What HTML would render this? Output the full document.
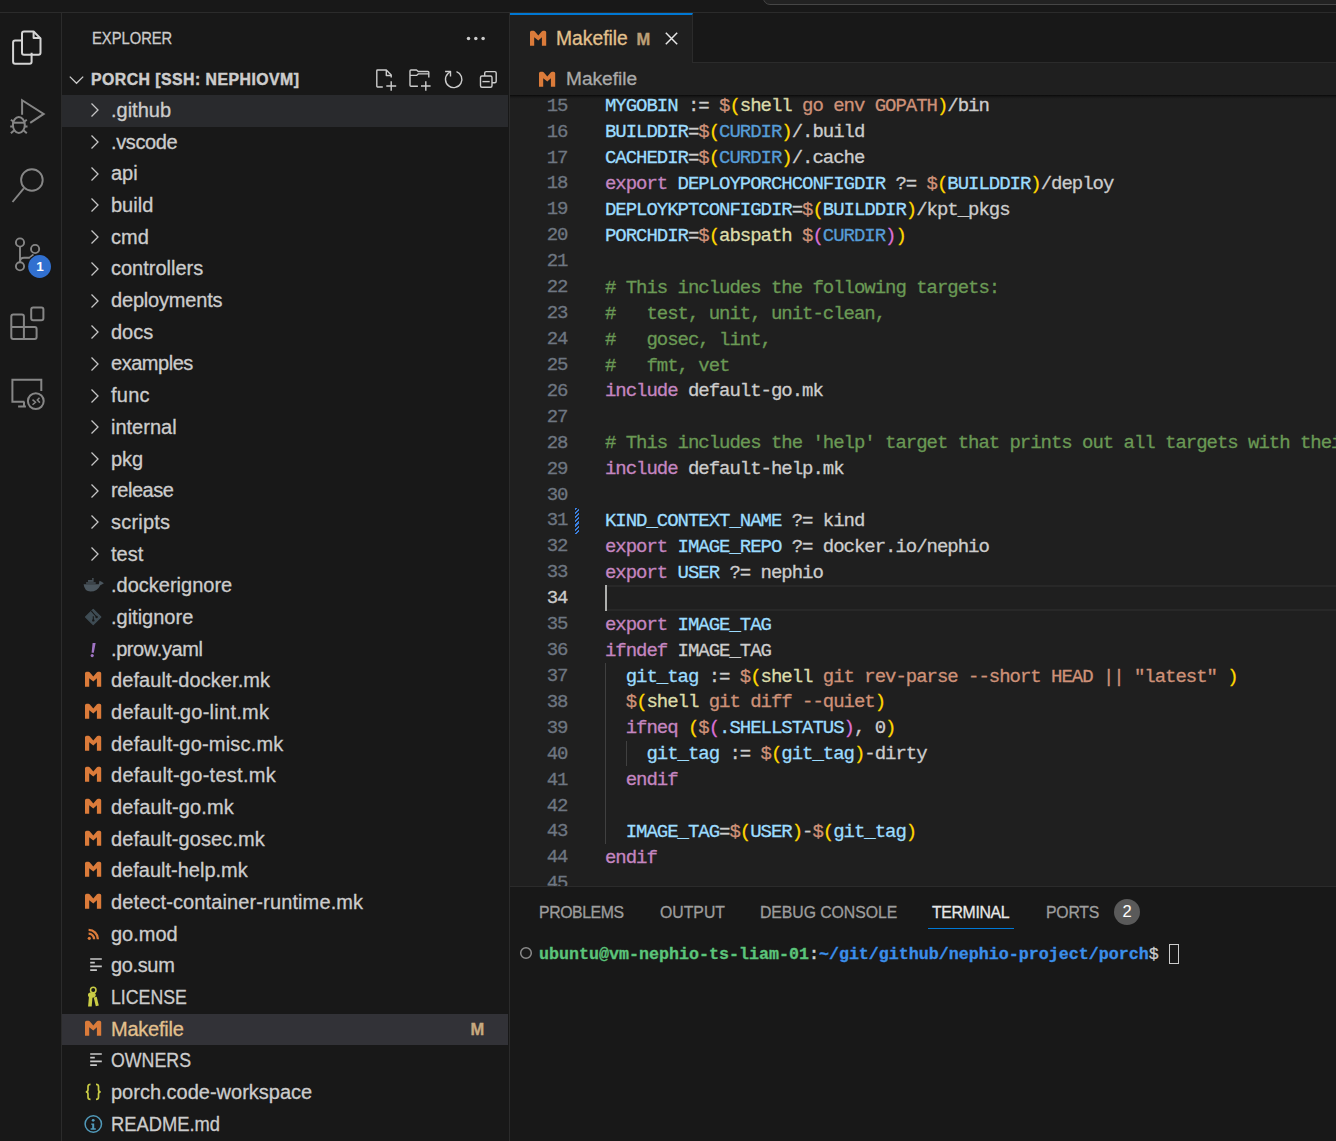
<!DOCTYPE html>
<html><head><meta charset="utf-8">
<style>
*{margin:0;padding:0;box-sizing:border-box}
html,body{width:1336px;height:1141px;overflow:hidden;background:#181818;font-family:"Liberation Sans",sans-serif;color:#cccccc}
.abs{position:absolute}
#title{position:absolute;left:0;top:0;width:1336px;height:13px;background:#181818;border-bottom:1px solid #2b2b2b}
#search{position:absolute;left:763px;top:-30px;width:700px;height:35px;border:1px solid #464646;border-radius:7px;background:#222222}
#act{position:absolute;left:0;top:13px;width:62px;height:1128px;background:#181818;border-right:1px solid #2b2b2b}
#act svg{position:absolute}
#side{position:absolute;left:62px;top:13px;width:448px;height:1128px;background:#181818;border-right:1px solid #2b2b2b}
#side .title{position:absolute;left:29.5px;top:0px;height:50px;line-height:50px;font-size:16.5px;color:#cccccc;transform:scaleX(0.893);transform-origin:0 0}
#side .dots{position:absolute;left:405px;top:24px}
#side .hdr{position:absolute;left:0;top:50.4px;width:447px;height:31.68px}
#side .hdr .t{position:absolute;left:29px;top:1px;line-height:31.68px;font-size:15.8px;letter-spacing:0.48px;font-weight:700;color:#cccccc}
#side .hdr svg{position:absolute}
.row{position:absolute;left:0;width:446px;height:31.68px}
.row.hov{background:#292a2d}
.row.sel{background:#323237}
.row .chev{position:absolute;left:28.3px;top:7.4px}
.row .fi{position:absolute;left:21px;top:6px;overflow:visible}
.row .nm{position:absolute;left:49px;top:0;line-height:31.68px;font-size:20px;color:#cccccc;white-space:pre}
.row.sel .nm{color:#e2c08d}
.row .deco{position:absolute;left:408.5px;top:0;line-height:31.68px;font-size:16.5px;font-weight:700;color:#e2c08d;opacity:.85}
#editor{position:absolute;left:510px;top:13px;width:826px;height:873px;background:#1f1f1f;overflow:hidden}
#tabs{position:absolute;left:0;top:0;width:826px;height:50px;background:#181818;border-bottom:1px solid #2b2b2b}
#tab{position:absolute;left:0;top:0;width:183px;height:50px;background:#1f1f1f;border-top:2px solid #0078d4;border-right:1px solid #2b2b2b}
#tab .nm{position:absolute;left:46px;top:0;line-height:48px;font-size:19.3px;color:#e2c08d}
#tab .m{position:absolute;left:126.5px;top:0;line-height:48px;font-size:16.5px;font-weight:700;color:#e2c08d;opacity:.8}
#tab svg{position:absolute}
#bc{position:absolute;left:0;top:50px;width:826px;height:32px;background:#1f1f1f}
#bc .nm{position:absolute;left:56px;top:0;line-height:32px;font-size:19.1px;color:#a9a9a9}
#bc svg{position:absolute}
#code{position:absolute;left:0;top:82px;width:826px;height:791px;overflow:hidden;font-family:"Liberation Mono",monospace;font-size:19px;letter-spacing:-1.03px}
#code .ln{position:absolute;left:0;margin-top:-0.6px;width:57.5px;text-align:right;height:25.92px;line-height:25.92px;color:#6e7681}
#code .ln.act{color:#cccccc}
#code .cl{position:absolute;left:95px;height:25.92px;line-height:25.92px;white-space:pre}
#shadow{position:absolute;left:0;top:82px;width:826px;height:4px;background:linear-gradient(#000000b0,#00000040 45%,#00000000)}
#curline{position:absolute;left:95px;top:572px;width:731px;height:26px;border-top:2px solid #282828;border-bottom:2px solid #282828}
#cursor{position:absolute;left:95px;top:572px;width:2px;height:26px;background:#aeafad}
.guide{position:absolute;width:1px;background:#404040}
#panel{position:absolute;left:510px;top:886px;width:826px;height:255px;background:#181818;border-top:1px solid #2b2b2b}
#panel .pt{position:absolute;top:1px;line-height:50px;font-size:15.8px;color:#9d9d9d;white-space:pre}
#panel .pt.on{color:#e7e7e7}
#panel .ul{position:absolute;left:418px;top:41px;width:86px;height:1px;background:#0078d4}
#panel .badge{position:absolute;left:604px;top:12px;width:26px;height:26px;border-radius:13px;background:#5a5a5a;color:#fff;font-size:16.5px;text-align:center;line-height:24.8px}
#term{position:absolute;left:29px;top:57px;font-family:"Liberation Mono",monospace;font-weight:700;font-size:16.67px;line-height:22px;white-space:pre}
#tcur{position:absolute;left:659px;top:57px;width:10px;height:20px;border:1px solid #cccccc}
body *{-webkit-text-stroke:0.3px currentColor}
#side .hdr .t{-webkit-text-stroke:0.45px currentColor}
#term,#panel .badge{-webkit-text-stroke:0.05px currentColor}
</style></head><body>
<div id="title"><div id="search"></div></div>

<div id="act">
  <svg style="left:0;top:0" width="61" height="420" viewBox="0 13 61 420">
    <g fill="none" stroke="#d4d4d4" stroke-width="2" stroke-linejoin="round">
      <path d="M24 31.5h9.6l6.9 6.9V52.8q0 2-2 2H24q-2 0-2-2V33.5q0-2 2-2z"/>
      <path d="M33.6 31.5v6.5h6.9"/>
      <path d="M22 40.5h-6.9q-2 0-2 2v19.2q0 2 2 2h14.5q2 0 2-2v-8.9"/>
    </g>
    <g fill="none" stroke="#868686" stroke-width="2">
      <path d="M22.1 114.8V100.2L43.7 113.9 30.2 122.9"/>
      <ellipse cx="18.85" cy="125" rx="5.95" ry="7.9"/>
      <path d="M13.2 122.7h11.3"/>
      <path d="M10.9 119.8l2.7 2M26.8 119.8l-2.7 2M10.2 126.4h2.7M27.5 126.4h-2.7M10.9 133.3l3.1-2.7M26.8 133.3l-3.1-2.7"/>
    </g>
    <g fill="none" stroke="#868686" stroke-width="1.9">
      <circle cx="31.9" cy="180" r="10.8"/>
      <path d="M23.8 188.3 12.5 202"/>
    </g>
    <g fill="none" stroke="#868686" stroke-width="1.9">
      <circle cx="20" cy="242.5" r="4.1"/>
      <circle cx="35.1" cy="249" r="4.1"/>
      <circle cx="20" cy="266.3" r="4.1"/>
      <path d="M20 246.6v15.6M20 261.7q0-4 4-4h5.5l4-3.2"/>
    </g>
    <circle cx="39.6" cy="266.5" r="12.6" fill="#181818"/>
    <circle cx="39.6" cy="266.5" r="11.4" fill="#3170d0"/>
    <text x="39.9" y="271" text-anchor="middle" font-family="Liberation Sans" font-weight="700" font-size="13.5" fill="#ffffff">1</text>
    <g fill="none" stroke="#868686" stroke-width="2" stroke-linejoin="round">
      <path d="M11.3 316.4q0-2 2-2h8.6q2 0 2 2v10.6h10.7q2 0 2 2v8.1q0 2-2 2H13.3q-2 0-2-2z"/>
      <path d="M11.3 327h12.6v12.1"/>
      <rect x="31.2" y="307.5" width="12.2" height="12.8" rx="2"/>
    </g>
    <g fill="none" stroke="#868686" stroke-width="2">
      <path d="M24.4 401.8H12.4V379.7h28.9v11.4"/>
      <path d="M24 401.8v4.8M18.1 406.6h7.8"/>
      <circle cx="35.8" cy="401.1" r="7.9"/>
      <path d="M32.5 399.6l3 2.6-3 2.6M39.5 397.8l-2.2 2.2 2.6 2.6" stroke-width="1.5"/>
    </g>
  </svg>
</div>

<div id="side">
  <div class="title">EXPLORER</div>
  <svg style="position:absolute;left:0;top:0" width="448" height="90" viewBox="62 13 448 90">
    <g fill="#cccccc"><circle cx="468.5" cy="38.5" r="1.75"/><circle cx="475.8" cy="38.5" r="1.75"/><circle cx="483.1" cy="38.5" r="1.75"/></g>
    <path d="M69.8 76.6 76.5 83.3l6.7-6.7" fill="none" stroke="#cccccc" stroke-width="1.3"/>
    <g fill="none" stroke="#cccccc" stroke-width="1.4" stroke-linejoin="round">
      <path d="M382.8 87H377.5q-.7 0-.7-.7V70.7q0-.7.7-.7h8.8l4.9 5v2.6"/>
      <path d="M386.3 70v5.5h4.9"/>
      <path d="M386.3 86h9.9M391.2 81.3v9.4"/>
      <path d="M417.9 86.3H411q-1 0-1-1V71q0-1 1-1h5.5l1.7 1.5h9.8q.8 0 .8.8v5.3"/>
      <path d="M410 75.4h6.5l1.7-1.5h10.6"/>
      <path d="M421 86h9.6M425.8 81.3v9.5"/>
      <path d="M456.5 71.7A8.2 8.2 0 1 1 448 73.5L450.5 71.5"/>
      <path d="M445.1 71.5h5.4v5"/>
      <rect x="480.5" y="76" width="11.5" height="11.3" rx="1.5"/>
      <path d="M484.7 76v-2.9q0-1.5 1.5-1.5h8.5q1.5 0 1.5 1.5v8.1q0 1.5-1.5 1.5H492"/>
      <path d="M482.4 81.6h7.3"/>
    </g>
  </svg>
  <div class="hdr"><div class="t">PORCH [SSH: NEPHIOVM]</div></div>
<div class="row hov" style="top:82.04px"><svg class="chev" width="10" height="16" viewBox="0 0 10 16"><path d="M1.5 1.5 8 8l-6.5 6.5" fill="none" stroke="#c5c5c5" stroke-width="1.3"/></svg><span class="nm">.github</span></div>
<div class="row" style="top:113.72px"><svg class="chev" width="10" height="16" viewBox="0 0 10 16"><path d="M1.5 1.5 8 8l-6.5 6.5" fill="none" stroke="#c5c5c5" stroke-width="1.3"/></svg><span class="nm" style="letter-spacing:-0.38px">.vscode</span></div>
<div class="row" style="top:145.40px"><svg class="chev" width="10" height="16" viewBox="0 0 10 16"><path d="M1.5 1.5 8 8l-6.5 6.5" fill="none" stroke="#c5c5c5" stroke-width="1.3"/></svg><span class="nm">api</span></div>
<div class="row" style="top:177.08px"><svg class="chev" width="10" height="16" viewBox="0 0 10 16"><path d="M1.5 1.5 8 8l-6.5 6.5" fill="none" stroke="#c5c5c5" stroke-width="1.3"/></svg><span class="nm">build</span></div>
<div class="row" style="top:208.76px"><svg class="chev" width="10" height="16" viewBox="0 0 10 16"><path d="M1.5 1.5 8 8l-6.5 6.5" fill="none" stroke="#c5c5c5" stroke-width="1.3"/></svg><span class="nm">cmd</span></div>
<div class="row" style="top:240.44px"><svg class="chev" width="10" height="16" viewBox="0 0 10 16"><path d="M1.5 1.5 8 8l-6.5 6.5" fill="none" stroke="#c5c5c5" stroke-width="1.3"/></svg><span class="nm">controllers</span></div>
<div class="row" style="top:272.12px"><svg class="chev" width="10" height="16" viewBox="0 0 10 16"><path d="M1.5 1.5 8 8l-6.5 6.5" fill="none" stroke="#c5c5c5" stroke-width="1.3"/></svg><span class="nm" style="letter-spacing:-0.18px">deployments</span></div>
<div class="row" style="top:303.80px"><svg class="chev" width="10" height="16" viewBox="0 0 10 16"><path d="M1.5 1.5 8 8l-6.5 6.5" fill="none" stroke="#c5c5c5" stroke-width="1.3"/></svg><span class="nm">docs</span></div>
<div class="row" style="top:335.48px"><svg class="chev" width="10" height="16" viewBox="0 0 10 16"><path d="M1.5 1.5 8 8l-6.5 6.5" fill="none" stroke="#c5c5c5" stroke-width="1.3"/></svg><span class="nm" style="letter-spacing:-0.47px">examples</span></div>
<div class="row" style="top:367.16px"><svg class="chev" width="10" height="16" viewBox="0 0 10 16"><path d="M1.5 1.5 8 8l-6.5 6.5" fill="none" stroke="#c5c5c5" stroke-width="1.3"/></svg><span class="nm" style="letter-spacing:0.23px">func</span></div>
<div class="row" style="top:398.84px"><svg class="chev" width="10" height="16" viewBox="0 0 10 16"><path d="M1.5 1.5 8 8l-6.5 6.5" fill="none" stroke="#c5c5c5" stroke-width="1.3"/></svg><span class="nm">internal</span></div>
<div class="row" style="top:430.52px"><svg class="chev" width="10" height="16" viewBox="0 0 10 16"><path d="M1.5 1.5 8 8l-6.5 6.5" fill="none" stroke="#c5c5c5" stroke-width="1.3"/></svg><span class="nm">pkg</span></div>
<div class="row" style="top:462.20px"><svg class="chev" width="10" height="16" viewBox="0 0 10 16"><path d="M1.5 1.5 8 8l-6.5 6.5" fill="none" stroke="#c5c5c5" stroke-width="1.3"/></svg><span class="nm" style="letter-spacing:-0.45px">release</span></div>
<div class="row" style="top:493.88px"><svg class="chev" width="10" height="16" viewBox="0 0 10 16"><path d="M1.5 1.5 8 8l-6.5 6.5" fill="none" stroke="#c5c5c5" stroke-width="1.3"/></svg><span class="nm" style="letter-spacing:0.2px">scripts</span></div>
<div class="row" style="top:525.56px"><svg class="chev" width="10" height="16" viewBox="0 0 10 16"><path d="M1.5 1.5 8 8l-6.5 6.5" fill="none" stroke="#c5c5c5" stroke-width="1.3"/></svg><span class="nm">test</span></div>
<div class="row" style="top:557.24px"><svg class="fi" width="22" height="20" viewBox="0 0 22 20"><g fill="#4b565e"><path d="M0.6 8.3H15.8L16.5 4.7Q18.5 5.5 20.9 7.2Q18.5 8.5 17.3 9.3Q14.5 15.6 7.5 15.6Q1.5 15.6 0.6 8.3Z"/><rect x="3.1" y="6.3" width="9.6" height="1.4"/><rect x="5" y="4.1" width="5.6" height="1.7"/><rect x="9.2" y="2" width="1.4" height="1.9"/></g></svg><span class="nm">.dockerignore</span></div>
<div class="row" style="top:588.92px"><svg class="fi" width="20" height="20" viewBox="0 0 20 20"><path d="M10.2 1.4 17.8 9 10.2 16.6 2.6 9Z" fill="#3f4d55" stroke="#3f4d55" stroke-width="1.2" stroke-linejoin="round"/><path d="M8.3 2.8 13.6 9M10.3 8.3v4.1" stroke="#181818" stroke-width="1.1" fill="none"/><circle cx="13.6" cy="9" r="1.2" fill="#181818"/><circle cx="10.3" cy="12.4" r="1.2" fill="#181818"/></svg><span class="nm">.gitignore</span></div>
<div class="row" style="top:620.60px"><svg class="fi" width="20" height="20" viewBox="0 0 20 20"><path d="M9.6 3h3L10.8 12.8H8.6z" fill="#a074c4"/><circle cx="9.2" cy="15.6" r="1.6" fill="#a074c4"/></svg><span class="nm" style="letter-spacing:-0.41px">.prow.yaml</span></div>
<div class="row" style="top:652.28px"><svg class="fi" width="20" height="20" viewBox="0 0 20 20"><path d="M2 15.7V2.3Q2 .7 3.6 .7H5.5Q6.3.7 6.9 1.4L10.3 5.5 13.7 1.4Q14.3.7 15.1.7H16.6Q18.2.7 18.2 2.3V15.7H13.9V7.2L10.3 10.6 6.2 7.2V15.7Z" fill="#db7b3a"/></svg><span class="nm" style="letter-spacing:0.075px">default-docker.mk</span></div>
<div class="row" style="top:683.96px"><svg class="fi" width="20" height="20" viewBox="0 0 20 20"><path d="M2 15.7V2.3Q2 .7 3.6 .7H5.5Q6.3.7 6.9 1.4L10.3 5.5 13.7 1.4Q14.3.7 15.1.7H16.6Q18.2.7 18.2 2.3V15.7H13.9V7.2L10.3 10.6 6.2 7.2V15.7Z" fill="#db7b3a"/></svg><span class="nm" style="letter-spacing:0.27px">default-go-lint.mk</span></div>
<div class="row" style="top:715.64px"><svg class="fi" width="20" height="20" viewBox="0 0 20 20"><path d="M2 15.7V2.3Q2 .7 3.6 .7H5.5Q6.3.7 6.9 1.4L10.3 5.5 13.7 1.4Q14.3.7 15.1.7H16.6Q18.2.7 18.2 2.3V15.7H13.9V7.2L10.3 10.6 6.2 7.2V15.7Z" fill="#db7b3a"/></svg><span class="nm" style="letter-spacing:0.2px">default-go-misc.mk</span></div>
<div class="row" style="top:747.32px"><svg class="fi" width="20" height="20" viewBox="0 0 20 20"><path d="M2 15.7V2.3Q2 .7 3.6 .7H5.5Q6.3.7 6.9 1.4L10.3 5.5 13.7 1.4Q14.3.7 15.1.7H16.6Q18.2.7 18.2 2.3V15.7H13.9V7.2L10.3 10.6 6.2 7.2V15.7Z" fill="#db7b3a"/></svg><span class="nm" style="letter-spacing:0.27px">default-go-test.mk</span></div>
<div class="row" style="top:779.00px"><svg class="fi" width="20" height="20" viewBox="0 0 20 20"><path d="M2 15.7V2.3Q2 .7 3.6 .7H5.5Q6.3.7 6.9 1.4L10.3 5.5 13.7 1.4Q14.3.7 15.1.7H16.6Q18.2.7 18.2 2.3V15.7H13.9V7.2L10.3 10.6 6.2 7.2V15.7Z" fill="#db7b3a"/></svg><span class="nm" style="letter-spacing:0.125px">default-go.mk</span></div>
<div class="row" style="top:810.68px"><svg class="fi" width="20" height="20" viewBox="0 0 20 20"><path d="M2 15.7V2.3Q2 .7 3.6 .7H5.5Q6.3.7 6.9 1.4L10.3 5.5 13.7 1.4Q14.3.7 15.1.7H16.6Q18.2.7 18.2 2.3V15.7H13.9V7.2L10.3 10.6 6.2 7.2V15.7Z" fill="#db7b3a"/></svg><span class="nm" style="letter-spacing:0.1px">default-gosec.mk</span></div>
<div class="row" style="top:842.36px"><svg class="fi" width="20" height="20" viewBox="0 0 20 20"><path d="M2 15.7V2.3Q2 .7 3.6 .7H5.5Q6.3.7 6.9 1.4L10.3 5.5 13.7 1.4Q14.3.7 15.1.7H16.6Q18.2.7 18.2 2.3V15.7H13.9V7.2L10.3 10.6 6.2 7.2V15.7Z" fill="#db7b3a"/></svg><span class="nm">default-help.mk</span></div>
<div class="row" style="top:874.04px"><svg class="fi" width="20" height="20" viewBox="0 0 20 20"><path d="M2 15.7V2.3Q2 .7 3.6 .7H5.5Q6.3.7 6.9 1.4L10.3 5.5 13.7 1.4Q14.3.7 15.1.7H16.6Q18.2.7 18.2 2.3V15.7H13.9V7.2L10.3 10.6 6.2 7.2V15.7Z" fill="#db7b3a"/></svg><span class="nm" style="letter-spacing:0.12px">detect-container-runtime.mk</span></div>
<div class="row" style="top:905.72px"><svg class="fi" width="20" height="20" viewBox="0 0 20 20"><g fill="none" stroke="#db7b3a" stroke-width="2.3"><path d="M5.6 8.7A5.5 5.5 0 0 1 11.1 14.2"/><path d="M5.6 4.9A9.3 9.3 0 0 1 14.9 14.2"/></g><circle cx="6.3" cy="13.3" r="1.6" fill="#db7b3a"/></svg><span class="nm">go.mod</span></div>
<div class="row" style="top:937.40px"><svg class="fi" width="20" height="20" viewBox="0 0 20 20"><g stroke="#c8c8c8" stroke-width="1.6"><path d="M7.2 3h11.6M7.2 6.6h4.6M7.2 10.4h11.6M7.2 14.1h6.7"/></g></svg><span class="nm" style="letter-spacing:-0.36px">go.sum</span></div>
<div class="row" style="top:969.08px"><svg class="fi" width="20" height="20" viewBox="0 0 20 20"><g fill="#c9cc45"><ellipse cx="8.85" cy="6.9" rx="3.9" ry="2.75"/><path d="M5.9 8.9 9.5 8.9 8.7 18.4 5.1 18.4z"/><path d="M10.7 9.6 13.7 8.8 15.8 17.5 12.8 18.3z"/></g><circle cx="10.25" cy="2.05" r="2.75" fill="none" stroke="#c9cc45" stroke-width="1.5"/></svg><span class="nm" style="transform:scaleX(0.886);transform-origin:0 0">LICENSE</span></div>
<div class="row sel" style="top:1000.76px"><svg class="fi" width="20" height="20" viewBox="0 0 20 20"><path d="M2 15.7V2.3Q2 .7 3.6 .7H5.5Q6.3.7 6.9 1.4L10.3 5.5 13.7 1.4Q14.3.7 15.1.7H16.6Q18.2.7 18.2 2.3V15.7H13.9V7.2L10.3 10.6 6.2 7.2V15.7Z" fill="#db7b3a"/></svg><span class="nm" style="letter-spacing:-0.23px">Makefile</span><span class="deco">M</span></div>
<div class="row" style="top:1032.44px"><svg class="fi" width="20" height="20" viewBox="0 0 20 20"><g stroke="#c8c8c8" stroke-width="1.6"><path d="M7.2 3h11.6M7.2 6.6h4.6M7.2 10.4h11.6M7.2 14.1h6.7"/></g></svg><span class="nm" style="transform:scaleX(0.889);transform-origin:0 0">OWNERS</span></div>
<div class="row" style="top:1064.12px"><svg class="fi" width="20" height="20" viewBox="0 0 20 20"><g fill="none" stroke="#c9cc45" stroke-width="1.7"><path d="M7.5 1.4Q5 1.4 5 3.5V6.8Q5 8.9 2.8 8.9Q5 8.9 5 11V14.3Q5 16.4 7.5 16.4"/><path d="M13 1.4Q15.5 1.4 15.5 3.5V6.8Q15.5 8.9 17.7 8.9Q15.5 8.9 15.5 11V14.3Q15.5 16.4 13 16.4"/></g></svg><span class="nm">porch.code-workspace</span></div>
<div class="row" style="top:1095.80px"><svg class="fi" width="20" height="20" viewBox="0 0 20 20"><circle cx="10.3" cy="9" r="8.2" fill="none" stroke="#519aba" stroke-width="1.5"/><path d="M8.2 8.5H11.2V13.3H12.8V14.7H7.6V13.3H9.2V9.8H8.2Z" fill="#519aba"/><circle cx="10.2" cy="5.3" r="1.4" fill="#519aba"/></svg><span class="nm" style="transform:scaleX(0.916);transform-origin:0 0">README.md</span></div>
</div>

<div id="editor">
  <div id="tabs">
    <div id="tab">
      <div style="position:absolute;left:18px;top:14.8px"><svg class="fi" width="20" height="20" viewBox="0 0 20 20"><path d="M2 15.7V2.3Q2 .7 3.6 .7H5.5Q6.3.7 6.9 1.4L10.3 5.5 13.7 1.4Q14.3.7 15.1.7H16.6Q18.2.7 18.2 2.3V15.7H13.9V7.2L10.3 10.6 6.2 7.2V15.7Z" fill="#db7b3a"/></svg></div>
      <div class="nm">Makefile</div>
      <div class="m">M</div>
      <svg style="left:155px;top:17px" width="13" height="13" viewBox="0 0 13 13"><path d="M.8 .8 12.2 12.2M12.2 .8 .8 12.2" stroke="#e6e6e6" stroke-width="1.5"/></svg>
    </div>
  </div>
  <div id="bc">
    <div style="position:absolute;left:27px;top:7.9px"><svg class="fi" width="20" height="20" viewBox="0 0 20 20"><path d="M2 15.7V2.3Q2 .7 3.6 .7H5.5Q6.3.7 6.9 1.4L10.3 5.5 13.7 1.4Q14.3.7 15.1.7H16.6Q18.2.7 18.2 2.3V15.7H13.9V7.2L10.3 10.6 6.2 7.2V15.7Z" fill="#db7b3a"/></svg></div>
    <div class="nm">Makefile</div>
  </div>
  <div id="code">
  <div id="curline" style="left:95px;top:490px"></div>
  <div id="cursor" style="top:490px"></div>
  <div class="guide" style="left:95px;top:567.76px;height:181.44px"></div>
  <div class="guide" style="left:116px;top:645.52px;height:25.92px"></div>
  <div style="position:absolute;left:65px;top:412.9px;width:4.3px;height:26px;background:repeating-linear-gradient(135deg,#3b80e0 0 1.6px,transparent 1.6px 3px)"></div>
<div class="ln" style="top:-0.68px">15</div><div class="cl" style="top:-0.68px"><span style="color:#9cdcfe">MYGOBIN</span><span style="color:#cccccc"> := </span><span style="color:#ce9178">$</span><span style="color:#ffd700">(</span><span style="color:#dcdcaa">shell</span><span style="color:#ce9178"> go env GOPATH</span><span style="color:#ffd700">)</span><span style="color:#cccccc">/bin</span></div>
<div class="ln" style="top:25.24px">16</div><div class="cl" style="top:25.24px"><span style="color:#9cdcfe">BUILDDIR</span><span style="color:#cccccc">=</span><span style="color:#ce9178">$</span><span style="color:#ffd700">(</span><span style="color:#569cd6">CURDIR</span><span style="color:#ffd700">)</span><span style="color:#cccccc">/.build</span></div>
<div class="ln" style="top:51.16px">17</div><div class="cl" style="top:51.16px"><span style="color:#9cdcfe">CACHEDIR</span><span style="color:#cccccc">=</span><span style="color:#ce9178">$</span><span style="color:#ffd700">(</span><span style="color:#569cd6">CURDIR</span><span style="color:#ffd700">)</span><span style="color:#cccccc">/.cache</span></div>
<div class="ln" style="top:77.08px">18</div><div class="cl" style="top:77.08px"><span style="color:#c586c0">export</span><span style="color:#cccccc"> </span><span style="color:#9cdcfe">DEPLOYPORCHCONFIGDIR</span><span style="color:#cccccc"> ?= </span><span style="color:#ce9178">$</span><span style="color:#ffd700">(</span><span style="color:#9cdcfe">BUILDDIR</span><span style="color:#ffd700">)</span><span style="color:#cccccc">/deploy</span></div>
<div class="ln" style="top:103.00px">19</div><div class="cl" style="top:103.00px"><span style="color:#9cdcfe">DEPLOYKPTCONFIGDIR</span><span style="color:#cccccc">=</span><span style="color:#ce9178">$</span><span style="color:#ffd700">(</span><span style="color:#9cdcfe">BUILDDIR</span><span style="color:#ffd700">)</span><span style="color:#cccccc">/kpt_pkgs</span></div>
<div class="ln" style="top:128.92px">20</div><div class="cl" style="top:128.92px"><span style="color:#9cdcfe">PORCHDIR</span><span style="color:#cccccc">=</span><span style="color:#ce9178">$</span><span style="color:#ffd700">(</span><span style="color:#dcdcaa">abspath</span><span style="color:#cccccc"> </span><span style="color:#ce9178">$</span><span style="color:#da70d6">(</span><span style="color:#569cd6">CURDIR</span><span style="color:#da70d6">)</span><span style="color:#ffd700">)</span></div>
<div class="ln" style="top:154.84px">21</div><div class="cl" style="top:154.84px"></div>
<div class="ln" style="top:180.76px">22</div><div class="cl" style="top:180.76px"><span style="color:#6a9955"># This includes the following targets:</span></div>
<div class="ln" style="top:206.68px">23</div><div class="cl" style="top:206.68px"><span style="color:#6a9955">#   test, unit, unit-clean,</span></div>
<div class="ln" style="top:232.60px">24</div><div class="cl" style="top:232.60px"><span style="color:#6a9955">#   gosec, lint,</span></div>
<div class="ln" style="top:258.52px">25</div><div class="cl" style="top:258.52px"><span style="color:#6a9955">#   fmt, vet</span></div>
<div class="ln" style="top:284.44px">26</div><div class="cl" style="top:284.44px"><span style="color:#c586c0">include</span><span style="color:#cccccc"> default-go.mk</span></div>
<div class="ln" style="top:310.36px">27</div><div class="cl" style="top:310.36px"></div>
<div class="ln" style="top:336.28px">28</div><div class="cl" style="top:336.28px"><span style="color:#6a9955"># This includes the &#x27;help&#x27; target that prints out all targets with their descriptions.</span></div>
<div class="ln" style="top:362.20px">29</div><div class="cl" style="top:362.20px"><span style="color:#c586c0">include</span><span style="color:#cccccc"> default-help.mk</span></div>
<div class="ln" style="top:388.12px">30</div><div class="cl" style="top:388.12px"></div>
<div class="ln" style="top:414.04px">31</div><div class="cl" style="top:414.04px"><span style="color:#9cdcfe">KIND_CONTEXT_NAME</span><span style="color:#cccccc"> ?= kind</span></div>
<div class="ln" style="top:439.96px">32</div><div class="cl" style="top:439.96px"><span style="color:#c586c0">export</span><span style="color:#cccccc"> </span><span style="color:#9cdcfe">IMAGE_REPO</span><span style="color:#cccccc"> ?= docker.io/nephio</span></div>
<div class="ln" style="top:465.88px">33</div><div class="cl" style="top:465.88px"><span style="color:#c586c0">export</span><span style="color:#cccccc"> </span><span style="color:#9cdcfe">USER</span><span style="color:#cccccc"> ?= nephio</span></div>
<div class="ln act" style="top:491.80px">34</div><div class="cl" style="top:491.80px"></div>
<div class="ln" style="top:517.72px">35</div><div class="cl" style="top:517.72px"><span style="color:#c586c0">export</span><span style="color:#cccccc"> </span><span style="color:#9cdcfe">IMAGE_TAG</span></div>
<div class="ln" style="top:543.64px">36</div><div class="cl" style="top:543.64px"><span style="color:#c586c0">ifndef</span><span style="color:#cccccc"> IMAGE_TAG</span></div>
<div class="ln" style="top:569.56px">37</div><div class="cl" style="top:569.56px"><span style="color:#cccccc">  </span><span style="color:#9cdcfe">git_tag</span><span style="color:#cccccc"> := </span><span style="color:#ce9178">$</span><span style="color:#ffd700">(</span><span style="color:#dcdcaa">shell</span><span style="color:#ce9178"> git rev-parse --short HEAD || &quot;latest&quot; </span><span style="color:#ffd700">)</span></div>
<div class="ln" style="top:595.48px">38</div><div class="cl" style="top:595.48px"><span style="color:#cccccc">  </span><span style="color:#ce9178">$</span><span style="color:#ffd700">(</span><span style="color:#dcdcaa">shell</span><span style="color:#ce9178"> git diff --quiet</span><span style="color:#ffd700">)</span></div>
<div class="ln" style="top:621.40px">39</div><div class="cl" style="top:621.40px"><span style="color:#cccccc">  </span><span style="color:#c586c0">ifneq</span><span style="color:#cccccc"> </span><span style="color:#ffd700">(</span><span style="color:#ce9178">$</span><span style="color:#da70d6">(</span><span style="color:#9cdcfe">.SHELLSTATUS</span><span style="color:#da70d6">)</span><span style="color:#cccccc">, 0</span><span style="color:#ffd700">)</span></div>
<div class="ln" style="top:647.32px">40</div><div class="cl" style="top:647.32px"><span style="color:#cccccc">    </span><span style="color:#9cdcfe">git_tag</span><span style="color:#cccccc"> := </span><span style="color:#ce9178">$</span><span style="color:#ffd700">(</span><span style="color:#9cdcfe">git_tag</span><span style="color:#ffd700">)</span><span style="color:#cccccc">-dirty</span></div>
<div class="ln" style="top:673.24px">41</div><div class="cl" style="top:673.24px"><span style="color:#cccccc">  </span><span style="color:#c586c0">endif</span></div>
<div class="ln" style="top:699.16px">42</div><div class="cl" style="top:699.16px"></div>
<div class="ln" style="top:725.08px">43</div><div class="cl" style="top:725.08px"><span style="color:#cccccc">  </span><span style="color:#9cdcfe">IMAGE_TAG</span><span style="color:#cccccc">=</span><span style="color:#ce9178">$</span><span style="color:#ffd700">(</span><span style="color:#9cdcfe">USER</span><span style="color:#ffd700">)</span><span style="color:#cccccc">-</span><span style="color:#ce9178">$</span><span style="color:#ffd700">(</span><span style="color:#9cdcfe">git_tag</span><span style="color:#ffd700">)</span></div>
<div class="ln" style="top:751.00px">44</div><div class="cl" style="top:751.00px"><span style="color:#c586c0">endif</span></div>
<div class="ln" style="top:776.92px">45</div><div class="cl" style="top:776.92px"></div>
  </div>
  <div id="shadow"></div>
</div>

<div id="panel">
  <div class="pt" style="left:29px;letter-spacing:-0.4px">PROBLEMS</div>
  <div class="pt" style="left:150px">OUTPUT</div>
  <div class="pt" style="left:250px;letter-spacing:-0.05px">DEBUG CONSOLE</div>
  <div class="pt on" style="left:422px;letter-spacing:-0.33px">TERMINAL</div>
  <div class="pt" style="left:536px;letter-spacing:-0.2px">PORTS</div>
  <div class="ul"></div>
  <div class="badge">2</div>
  <svg style="position:absolute;left:9px;top:59px" width="14" height="14" viewBox="0 0 14 14"><circle cx="7" cy="7" r="5.3" fill="none" stroke="#8b8b8b" stroke-width="1.5"/></svg>
  <div id="term"><span style="color:#5bc47a">ubuntu@vm-nephio-ts-liam-01</span><span style="color:#cccccc">:</span><span style="color:#3b8eea">~/git/github/nephio-project/porch</span><span style="color:#cccccc;font-weight:400">$ </span></div>
  <div id="tcur"></div>
</div>
</body></html>
